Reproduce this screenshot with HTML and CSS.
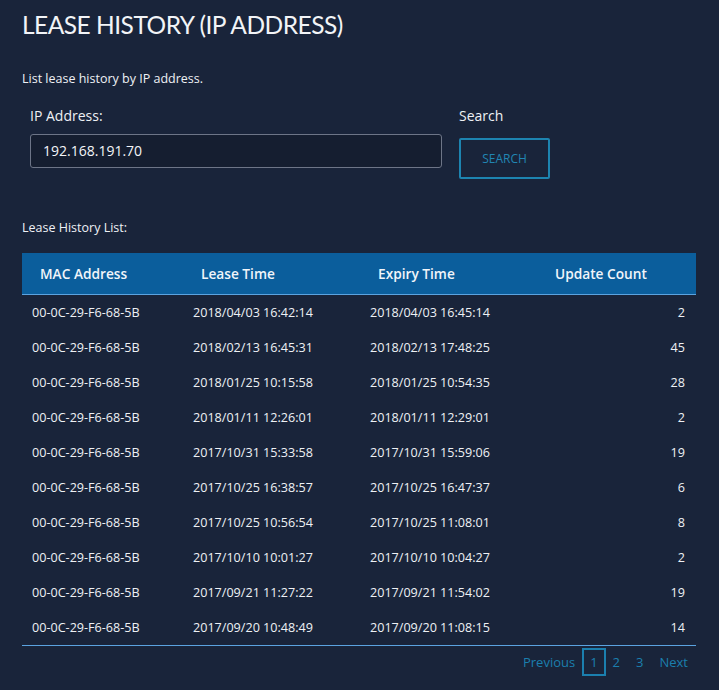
FILE: index.html
```html
<!DOCTYPE html>
<html>
<head>
<meta charset="utf-8">
<link rel="stylesheet" href="styles.css">
</head>
<body>
<div class="page">
  <h1 class="title">LEASE HISTORY (IP ADDRESS)</h1>
  <p class="desc">List lease history by IP address.</p>
  <div class="form">
    <div class="field">
      <label class="label">IP Address:</label>
      <div class="input">192.168.191.70</div>
    </div>
    <div class="field search-field">
      <label class="label">Search</label>
      <button class="btn">SEARCH</button>
    </div>
  </div>
  <p class="list-label">Lease History List:</p>
  <table class="table">
    <colgroup>
      <col class="c1"><col class="c2"><col class="c3"><col class="c4">
    </colgroup>
    <thead>
      <tr><th>MAC Address</th><th>Lease Time</th><th>Expiry Time</th><th>Update Count</th></tr>
    </thead>
    <tbody>
      <tr><td>00-0C-29-F6-68-5B</td><td>2018/04/03 16:42:14</td><td>2018/04/03 16:45:14</td><td class="num">2</td></tr>
      <tr><td>00-0C-29-F6-68-5B</td><td>2018/02/13 16:45:31</td><td>2018/02/13 17:48:25</td><td class="num">45</td></tr>
      <tr><td>00-0C-29-F6-68-5B</td><td>2018/01/25 10:15:58</td><td>2018/01/25 10:54:35</td><td class="num">28</td></tr>
      <tr><td>00-0C-29-F6-68-5B</td><td>2018/01/11 12:26:01</td><td>2018/01/11 12:29:01</td><td class="num">2</td></tr>
      <tr><td>00-0C-29-F6-68-5B</td><td>2017/10/31 15:33:58</td><td>2017/10/31 15:59:06</td><td class="num">19</td></tr>
      <tr><td>00-0C-29-F6-68-5B</td><td>2017/10/25 16:38:57</td><td>2017/10/25 16:47:37</td><td class="num">6</td></tr>
      <tr><td>00-0C-29-F6-68-5B</td><td>2017/10/25 10:56:54</td><td>2017/10/25 11:08:01</td><td class="num">8</td></tr>
      <tr><td>00-0C-29-F6-68-5B</td><td>2017/10/10 10:01:27</td><td>2017/10/10 10:04:27</td><td class="num">2</td></tr>
      <tr><td>00-0C-29-F6-68-5B</td><td>2017/09/21 11:27:22</td><td>2017/09/21 11:54:02</td><td class="num">19</td></tr>
      <tr><td>00-0C-29-F6-68-5B</td><td>2017/09/20 10:48:49</td><td>2017/09/20 11:08:15</td><td class="num">14</td></tr>
    </tbody>
  </table>
  <div class="pager">
    <span class="pg">Previous</span>
    <span class="pg active">1</span>
    <span class="pg">2</span>
    <span class="pg">3</span>
    <span class="pg">Next</span>
  </div>
</div>
</body>
</html>
```
FILE: styles.css
```css
html, body {
  margin: 0;
  padding: 0;
  background: #19243a;
}
body {
  font-family: "Open Sans", "Noto Sans", sans-serif;
  color: #eef1f5;
}
.page {
  padding: 7px 23px 0 22px;
  width: 674px;
}
.title {
  font-family: Lato, "Open Sans", sans-serif;
  font-weight: 400;
  font-size: 24.5px;
  line-height: 36px;
  margin: 0;
  letter-spacing: -0.5px;
  color: #f2f4f7;
}
.desc {
  font-size: 12.5px;
  margin: 27px 0 0 0;
  line-height: 18px;
}
.form {
  display: flex;
  gap: 17px;
  padding-left: 8px;
  margin-top: 18px;
}
.field {
  display: flex;
  flex-direction: column;
}
.label {
  font-size: 14px;
  line-height: 20px;
  margin-bottom: 8px;
}
.input {
  width: 398px;
  height: 32px;
  border: 1px solid #6d7587;
  border-radius: 3px;
  background: #151e30;
  padding: 0 0 0 12px;
  font-size: 14px;
  line-height: 32px;
  color: #f3f5f8;
}
.btn {
  width: 91px;
  height: 41px;
  margin-top: 4px;
  border: 2px solid #1d84b0;
  border-radius: 2px;
  background: transparent;
  color: #2186b3;
  font-family: "Open Sans", sans-serif;
  font-size: 12px;
  padding: 0;
}
.list-label {
  font-size: 12.5px;
  margin: 40px 0 0 0;
  line-height: 18px;
}
.table {
  margin-top: 16px;
  width: 674px;
  border-collapse: collapse;
  table-layout: fixed;
}
.c1 { width: 161px; }
.c2 { width: 177px; }
.c3 { width: 177px; }
.c4 { width: 159px; }
.table th {
  background: #0b5e9c;
  height: 41px;
  padding: 0 0 0 18px;
  text-align: left;
  font-size: 13.7px;
  font-weight: 600;
  color: #f1f5fa;
  border-bottom: 1px solid #5ba3e0;
}
.table td {
  height: 35px;
  padding: 0 0 0 10px;
  font-size: 12.6px;
  color: #eef1f5;
}
.table td.num {
  text-align: right;
  padding: 0 11px 0 0;
}
.table tbody tr:last-child td {
  border-bottom: 1px solid #5ba3e0;
}
.pager {
  display: flex;
  justify-content: flex-end;
  align-items: center;
  margin-top: 2px;
}
.pg {
  color: #1b7fae;
  font-size: 13px;
  padding: 0 8px;
  line-height: 24px;
}
.pg.active {
  border: 2px solid #1b7fae;
  padding: 0 6px;
  margin: 0 -1px;
}
```
